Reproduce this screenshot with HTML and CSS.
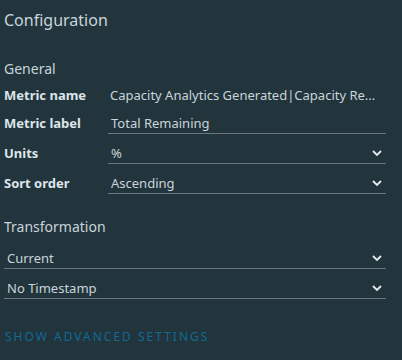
FILE: index.html
```html
<!DOCTYPE html>
<html lang="en">
<head>
  <meta charset="UTF-8" />
  <title>Configuration</title>
  <link rel="stylesheet" href="styles.css">
</head>
<body>
  <div class="painel">
    <h1>Configuration</h1>

    <h2 class="secao">General</h2>
    <div class="linha primeira">
      <span class="rotulo">Metric name</span>
      <span class="valor texto">Capacity Analytics Generated|Capacity Re...</span>
    </div>
    <div class="linha">
      <span class="rotulo">Metric label</span>
      <span class="valor campo">Total Remaining</span>
    </div>
    <div class="linha">
      <span class="rotulo">Units</span>
      <span class="valor campo select">%
        <svg class="seta" viewBox="0 0 10 6"><path d="M1 1 L5 5 L9 1" /></svg>
      </span>
    </div>
    <div class="linha">
      <span class="rotulo">Sort order</span>
      <span class="valor campo select">Ascending
        <svg class="seta" viewBox="0 0 10 6"><path d="M1 1 L5 5 L9 1" /></svg>
      </span>
    </div>

    <h2 class="secao transf">Transformation</h2>
    <div class="campo select cheio">Current
      <svg class="seta" viewBox="0 0 10 6"><path d="M1 1 L5 5 L9 1" /></svg>
    </div>
    <div class="campo select cheio">No Timestamp
      <svg class="seta" viewBox="0 0 10 6"><path d="M1 1 L5 5 L9 1" /></svg>
    </div>

    <a class="avancado" href="#">SHOW ADVANCED SETTINGS</a>
  </div>
</body>
</html>
```

FILE: styles.css
```css
body {
  margin: 0;
  background: #22343c;
  font-family: 'Noto Sans', 'Open Sans', sans-serif;
  color: #c9d4db;
}

.painel {
  width: 382px;
  padding: 8px 0 0 4px;
}

h1 {
  font-size: 16px;
  font-weight: normal;
  margin: 0 0 27px 0;
  line-height: 24px;
}

.secao {
  font-size: 14px;
  font-weight: normal;
  margin: 0;
  line-height: 20px;
}

.transf {
  margin-top: 23px;
  margin-bottom: 2px;
}

.linha {
  display: flex;
  align-items: flex-end;
  height: 30px;
}

.linha.primeira {
  height: 25px;
}

.rotulo {
  width: 104px;
  font-size: 13px;
  font-weight: bold;
  color: #dde5eb;
  line-height: 16px;
  padding-bottom: 3px;
}

.primeira .rotulo {
  padding-bottom: 1px;
}

.valor {
  flex: 1;
  font-size: 13px;
  padding-left: 2px;
}

.texto {
  padding-bottom: 1px;
  line-height: 16px;
  white-space: nowrap;
  overflow: hidden;
}

.campo {
  display: flex;
  align-items: flex-end;
  box-sizing: border-box;
  height: 30px;
  border-bottom: 1px solid #6b767d;
  font-size: 13px;
  line-height: 16px;
  padding: 0 0 2px 3px;
}

.select {
  justify-content: space-between;
}

.seta {
  width: 10px;
  height: 6px;
  margin: 0 4px 5px 0;
  fill: none;
  stroke: #e6ebee;
  stroke-width: 1.8;
}

.avancado {
  display: block;
  margin: 30px 0 0 1px;
  font-size: 12px;
  line-height: 16px;
  letter-spacing: 2px;
  color: #0f6a96;
  text-decoration: none;
}
```
